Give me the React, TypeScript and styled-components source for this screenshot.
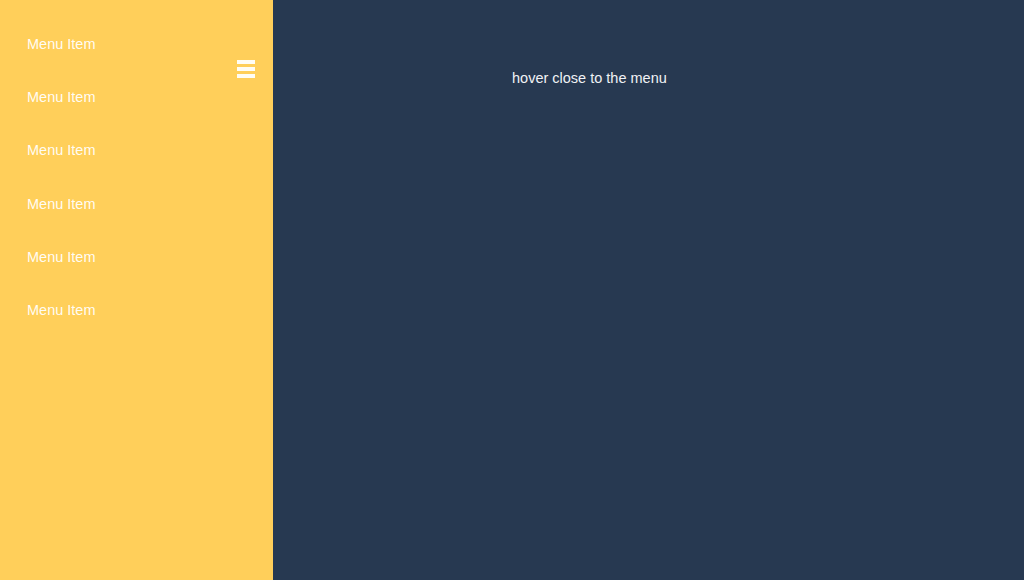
import styled, { createGlobalStyle } from "styled-components";

const GlobalStyle = createGlobalStyle`
  html, body {
    margin: 0;
    padding: 0;
    height: 100%;
  }
  body {
    font-family: "Liberation Sans", Arial, sans-serif;
    background: #273951;
    overflow: hidden;
  }
  #root {
    height: 100%;
  }
`;

const Page = styled.div`
  display: flex;
  height: 100vh;
  width: 100vw;
`;

const Sidebar = styled.nav`
  position: relative;
  width: 273px;
  flex-shrink: 0;
  background: #ffcf5a;
  padding-top: 17px;
  box-sizing: border-box;
`;

const MenuList = styled.ul`
  list-style: none;
  margin: 0;
  padding: 0;
`;

const MenuItem = styled.li`
  height: 53.33px;
  display: flex;
  align-items: center;
  padding-left: 27px;
  font-size: 14.5px;
  color: rgba(255, 255, 255, 0.94);
  cursor: pointer;
`;

const Burger = styled.button`
  position: absolute;
  top: 60px;
  right: 18px;
  width: 18px;
  height: 18px;
  padding: 0;
  border: 0;
  background: none;
  display: flex;
  flex-direction: column;
  justify-content: space-between;
  cursor: pointer;
`;

const Bar = styled.span`
  display: block;
  height: 4px;
  background: #fffdf5;
`;

const Main = styled.main`
  flex: 1;
  background: #273951;
  padding: 70px 0 0 239px;
`;

const Hint = styled.p`
  margin: 0;
  font-size: 14.5px;
  color: #f0f2f5;
`;

const items = Array.from({ length: 6 }, () => "Menu Item");

export default function App() {
  return (
    <>
      <GlobalStyle />
      <Page>
        <Sidebar>
          <MenuList>
            {items.map((label, i) => (
              <MenuItem key={i}>{label}</MenuItem>
            ))}
          </MenuList>
          <Burger aria-label="menu">
            <Bar />
            <Bar />
            <Bar />
          </Burger>
        </Sidebar>
        <Main>
          <Hint>hover close to the menu</Hint>
        </Main>
      </Page>
    </>
  );
}
